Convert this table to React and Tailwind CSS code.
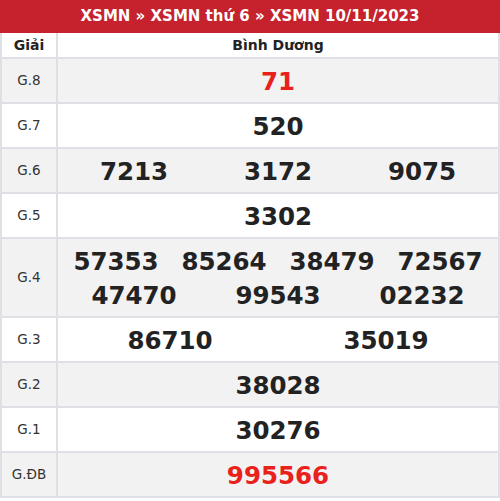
const rows = [
  { label: "G.8", lines: [["71"]], red: true },
  { label: "G.7", lines: [["520"]] },
  { label: "G.6", lines: [["7213", "3172", "9075"]] },
  { label: "G.5", lines: [["3302"]] },
  { label: "G.4", lines: [["57353", "85264", "38479", "72567"], ["47470", "99543", "02232"]] },
  { label: "G.3", lines: [["86710", "35019"]] },
  { label: "G.2", lines: [["38028"]] },
  { label: "G.1", lines: [["30276"]] },
  { label: "G.ĐB", lines: [["995566"]], red: true },
];

const cols = {
  1: "grid-cols-1",
  2: "grid-cols-2",
  3: "grid-cols-3",
  4: "grid-cols-4",
};

export default function App() {
  return (
    <div className="w-[500px] bg-white text-[#222] font-['DejaVu_Sans',sans-serif]">
      {/* Title */}
      <div className="h-[33px] bg-[#c5222d] text-white text-[15px] font-bold flex items-center justify-center">
        XSMN » XSMN thứ 6 » XSMN 10/11/2023
      </div>

      <div className="border-x-2 border-b-2 border-[#dfe0e5]">
        {/* Column heads */}
        <div className="flex h-[26px] border-b-2 border-[#dfe0e5] text-[14px] font-bold">
          <div className="w-[56px] shrink-0 border-r-2 border-[#dfe0e5] flex items-center justify-center">
            Giải
          </div>
          <div className="flex-1 flex items-center justify-center">Bình Dương</div>
        </div>

        {rows.map((r, i) => (
          <div
            key={r.label}
            className={
              "flex border-b-2 last:border-b-0 border-[#dfe0e5] " +
              (i % 2 === 0 ? "bg-[#f2f2f3]" : "bg-white")
            }
          >
            <div className="w-[56px] shrink-0 border-r-2 border-[#dfe0e5] flex items-center justify-center text-[13.5px] text-[#333]">
              {r.label}
            </div>
            <div
              className={
                "flex-1 flex flex-col justify-center px-1 pt-[2px] " +
                (r.lines.length > 1 ? "h-[77px]" : "h-[43px]")
              }
            >
              {r.lines.map((line, j) => (
                <div key={j} className={"grid " + cols[line.length]}>
                  {line.map((n) => (
                    <span
                      key={n}
                      className={
                        "text-center text-[24.5px] font-bold leading-[34px] " +
                        (r.red ? "text-[#e8211b]" : "text-[#222]")
                      }
                    >
                      {n}
                    </span>
                  ))}
                </div>
              ))}
            </div>
          </div>
        ))}
      </div>
    </div>
  );
}
